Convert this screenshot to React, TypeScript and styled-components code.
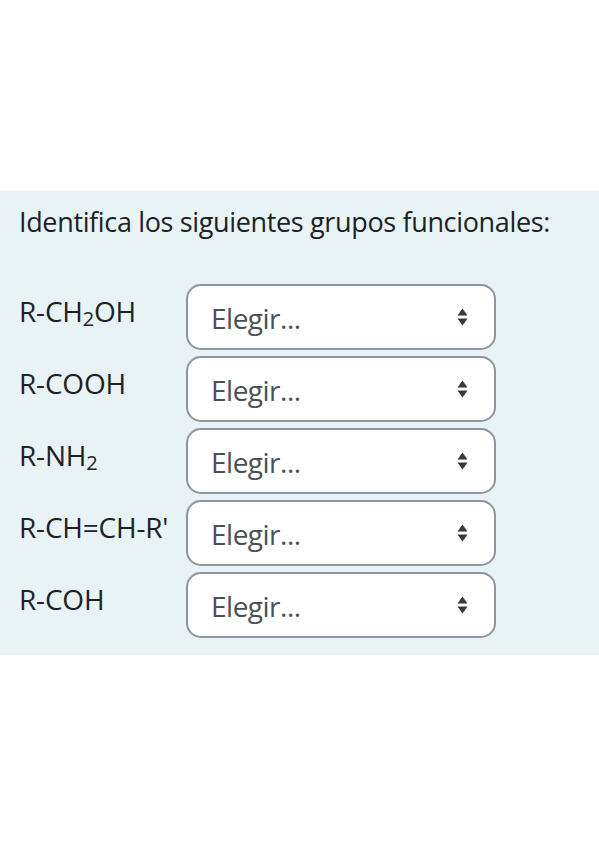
import styled, { createGlobalStyle } from "styled-components";

const GlobalStyle = createGlobalStyle`
  html, body {
    margin: 0;
    padding: 0;
    background: #ffffff;
  }
  body {
    font-family: "Open Sans", "Noto Sans", sans-serif;
    color: #1d2125;
  }
`;

const groups = [
  { key: "alcohol", label: <>R-CH<sub>2</sub>OH</> },
  { key: "acid", label: <>R-COOH</> },
  { key: "amine", label: <>R-NH<sub>2</sub></> },
  { key: "alkene", label: <>R-CH=CH-R'</> },
  { key: "aldehyde", label: <>R-COH</> },
];

const SortIcon = () => (
  <svg width="11" height="19" viewBox="0 0 11 19" aria-hidden="true">
    <path d="M5.5 1 L10.5 8 H0.5 Z" fill="#343a40" />
    <path d="M5.5 18 L10.5 11 H0.5 Z" fill="#343a40" />
  </svg>
);

export default function App() {
  return (
    <>
      <GlobalStyle />
      <Page>
        <Panel>
          <Heading>Identifica los siguientes grupos funcionales:</Heading>
          <Rows>
            {groups.map((g) => (
              <Row key={g.key}>
                <Label>{g.label}</Label>
                <SelectWrap>
                  <Select defaultValue="">
                    <option value="">Elegir...</option>
                    <option value="1">Alcohol</option>
                    <option value="2">Ácido carboxílico</option>
                    <option value="3">Amina</option>
                    <option value="4">Alqueno</option>
                    <option value="5">Aldehído</option>
                  </Select>
                  <Arrow>
                    <SortIcon />
                  </Arrow>
                </SelectWrap>
              </Row>
            ))}
          </Rows>
        </Panel>
      </Page>
    </>
  );
}

const Page = styled.div`
  padding-top: 191px;
  min-height: 848px;
  box-sizing: border-box;
`;

const Panel = styled.div`
  background: #e7f3f5;
  padding: 10px 19px 17px 19px;
`;

const Heading = styled.p`
  margin: 0 0 41px 0;
  font-size: 27px;
  letter-spacing: -0.35px;
  line-height: 42px;
  color: #1d2125;
  white-space: nowrap;
`;

const Rows = styled.div`
  display: flex;
  flex-direction: column;
  gap: 6px;
`;

const Row = styled.div`
  display: flex;
  align-items: flex-start;
`;

const Label = styled.div`
  width: 167px;
  flex-shrink: 0;
  padding-top: 6px;
  font-size: 28px;
  letter-spacing: -0.2px;
  line-height: 42px;
  color: #1d2125;
  white-space: nowrap;

  sub {
    font-size: 20px;
    line-height: 0;
    vertical-align: -4px;
  }
`;

const SelectWrap = styled.div`
  position: relative;
  width: 310px;
`;

const Select = styled.select`
  appearance: none;
  -webkit-appearance: none;
  display: block;
  width: 100%;
  height: 66px;
  box-sizing: border-box;
  padding: 2px 48px 0 23px;
  border: 2px solid #8f959e;
  border-radius: 15px;
  background: #ffffff;
  font-family: "Open Sans", "Noto Sans", sans-serif;
  font-size: 28px;
  letter-spacing: -0.5px;
  color: #495057;
  outline: none;
`;

const Arrow = styled.span`
  position: absolute;
  right: 28px;
  top: 50%;
  transform: translateY(-50%);
  display: flex;
  pointer-events: none;
`;
